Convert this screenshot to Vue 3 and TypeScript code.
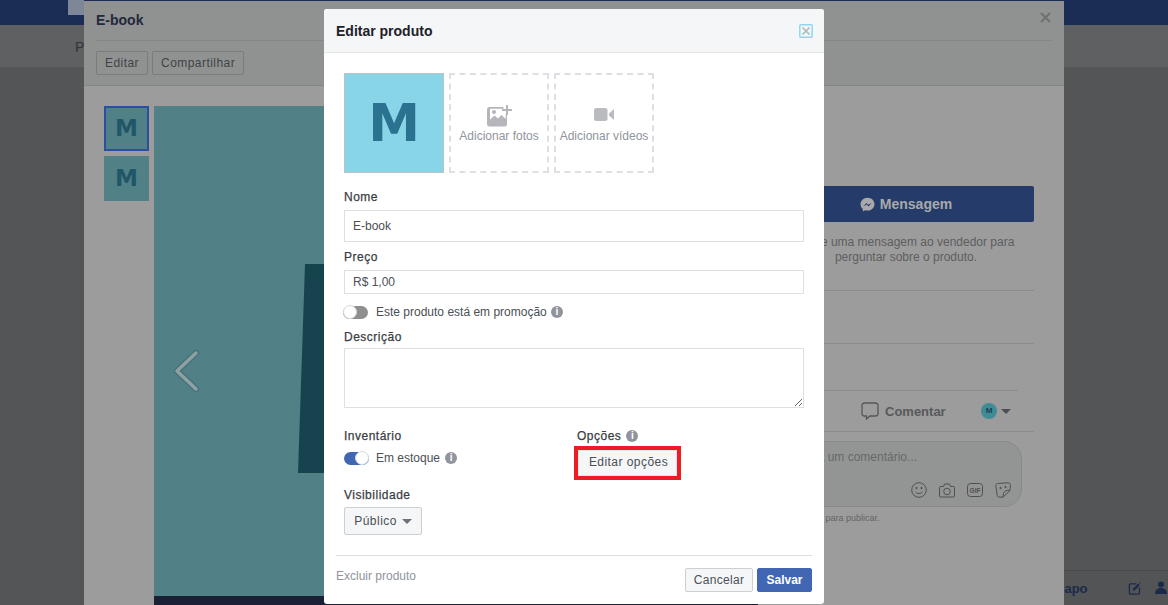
<script setup lang="ts">
import { ref } from 'vue'
const nome = ref('E-book')
const preco = ref('R$ 1,00')
</script>

<template>
  <div class="screen">
    <header class="nav"><span class="nav-logo"></span></header>
    <div class="subbar">Pá</div>

    <div class="chatbar">
      <span class="chat-word">Bate-papo</span>
      <svg width="15" height="15" viewBox="0 0 15 15" fill="none"><path d="M9 2.500H2.500a1 1 0 0 0-1 1v9a1 1 0 0 0 1 1h9a1 1 0 0 0 1-1V6.500" stroke="#1c2a4a" stroke-width="1.400" /><path d="M5 10l.7-2.500L11 2.200l1.800 1.800L7.500 9.300z" fill="#1c2a4a" /><path d="M13 .6l1 1-.8.8-1-1z" fill="#1c2a4a" /></svg>
      <svg class="chat-person" width="14" height="14" viewBox="0 0 14 14"><circle cx="7" cy="3.500" r="3" fill="#1c2a4a" /><path d="M1 13c0-4 2.500-6 6-6s6 2 6 6z" fill="#1c2a4a" /></svg>
    </div>

    <section class="dialog">
      <div class="dialog-head">
        <div class="dialog-title">
          <span>E-book</span>
          <svg class="dialog-x" width="11" height="11" viewBox="0 0 11 11"><path d="M1 1l9 9M10 1l-9 9" stroke="#707172" stroke-width="2.2" /></svg>
        </div>
        <div class="dialog-actions">
          <span class="ghost">Editar</span>
          <span class="ghost">Compartilhar</span>
        </div>
      </div>
      <div class="dialog-body">
        <div class="thumbs">
          <div class="thumb active">M</div>
          <div class="thumb">M</div>
        </div>
        <div class="stage">
          <div class="art">
            <div class="art-shape"></div>
            <svg class="art-prev" width="28" height="44" viewBox="0 0 28 44"><path d="M22 4L3 22l19 18" fill="none" stroke="#44737b" stroke-width="6.500" stroke-linecap="round" stroke-linejoin="round" /><path d="M22 4L3 22l19 18" fill="none" stroke="#8fa0a2" stroke-width="3.500" stroke-linecap="round" stroke-linejoin="round" /></svg>
          </div>
          <div class="art-foot"></div>
        </div>
        <aside class="side">
          <div class="msg-btn">
            <svg width="15" height="15" viewBox="0 0 16 16"><path d="M8 .8C3.800.8.600 3.900.600 7.800c0 2.100.900 3.900 2.400 5.100v2.500l2.300-1.300c.8.200 1.700.4 2.700.4 4.200 0 7.400-3.100 7.400-6.900S12.200.8 8 .8z" fill="#a9a9a9" /><path d="M3.600 10l3.200-3.600 1.900 1.900 3.600-1.900-3.200 3.600-1.900-1.900z" fill="#253c6b" /></svg>
            <span>Mensagem</span>
          </div>
          <p class="side-note">Envie uma mensagem ao vendedor para<br />perguntar sobre o produto.</p>
          <div class="side-sep first"></div>
          <div class="side-sep second"></div>
          <div class="side-sep third"></div>
          <div class="comment-row">
            <svg width="18" height="18" viewBox="0 0 18 18"><path d="M3.500 1h11A2.500 2.500 0 0 1 17 3.500v8a2.500 2.500 0 0 1-2.500 2.500H9l-3.500 3v-3h-2A2.500 2.500 0 0 1 1 11.500v-8A2.500 2.500 0 0 1 3.500 1z" fill="none" stroke="#555658" stroke-width="1.300" /></svg>
            <span class="comment-word">Comentar</span>
            <span class="avatar">M</span>
            <span class="caret dim"></span>
          </div>
          <div class="comment-box">
            <span class="comment-ph">Escreva um comentário...</span>
            <div class="comment-icons">
              <svg width="16" height="16" viewBox="0 0 16 16" fill="none" stroke="#4f5052"><circle cx="8" cy="8" r="7.300" /><circle cx="5.500" cy="6" r=".7" fill="#4f5052" /><circle cx="10.500" cy="6" r=".7" fill="#4f5052" /><path d="M4.500 10c1.800 2 5.200 2 7 0" /></svg>
              <svg width="16" height="15" viewBox="0 0 16 15" fill="none" stroke="#4f5052"><path d="M1.500 3.500h3l1-2.500h5l1 2.500h3a1 1 0 0 1 1 1v8.500a1 1 0 0 1-1 1h-13a1 1 0 0 1-1-1v-8.500a1 1 0 0 1 1-1z" /><circle cx="8" cy="8.500" r="3.300" /></svg>
              <svg width="16" height="14" viewBox="0 0 16 14"><rect x=".5" y=".5" width="15" height="13" rx="3" fill="none" stroke="#4f5052" /><text x="8" y="10" text-anchor="middle" class="gif">GIF</text></svg>
              <svg width="16" height="16" viewBox="0 0 16 16" fill="none" stroke="#4f5052"><path d="M2.500 1.500L13 .8c1.500 0 2.400 1 2.300 2.500l-.3 5.200L8 15.200 4 15c-1 0-1.600-.7-1.800-1.500L.8 3.500c-.1-1 .6-1.900 1.700-2z" /><path d="M15 8.500c-3.500-.5-6 .5-6.500 3-.2 1.300-.3 2.500-.5 3.700" /><circle cx="5.500" cy="6" r=".7" fill="#4f5052" /><circle cx="10.500" cy="5" r=".7" fill="#4f5052" /></svg>
            </div>
          </div>
          <p class="comment-hint">Pressione Enter para publicar.</p>
        </aside>
      </div>
    </section>

    <main class="modal">
      <div class="modal-head">
        <h1>Editar produto</h1>
        <svg width="14" height="14" viewBox="0 0 14 14"><rect x=".8" y=".8" width="12.400" height="12.400" rx="1" fill="none" stroke="#8fd8ea" stroke-width="1.500" /><path d="M3.500 3.500l7 7M10.500 3.500l-7 7" stroke="#b4b7bd" stroke-width="1.700" /></svg>
      </div>
      <div class="modal-body">
        <div class="media">
          <div class="tile-image">M</div>
          <div class="tile-add">
            <svg width="25" height="22" viewBox="0 0 25 22"><path d="M2.500 2h14v1.800H3.800a.8.800 0 0 0-.8.800v10l4.500-4 3.500 3 3.500-3.500 4.200 4V9H20v10a2.500 2.500 0 0 1-2.500 2.500h-15A2.500 2.500 0 0 1 0 19V4.500A2.500 2.500 0 0 1 2.500 2z" fill="#b4b6bc" /><circle cx="7" cy="7" r="2" fill="#b4b6bc" /><path d="M19 0h2v4h4v2h-4v4h-2V6h-4V4h4z" fill="#b4b6bc" /></svg>
            <span>Adicionar fotos</span>
          </div>
          <div class="tile-add">
            <svg class="video" width="20" height="13" viewBox="0 0 20 13"><rect width="13.500" height="13" rx="2.500" fill="#b9bbc1" /><path d="M15 5.500L20 1v11l-5-4.500z" fill="#b9bbc1" /></svg>
            <span>Adicionar vídeos</span>
          </div>
        </div>

        <label class="field-label nome">Nome</label>
        <input v-model="nome" class="text-input tall" type="text" />

        <label class="field-label preco">Preço</label>
        <input v-model="preco" class="text-input short" type="text" />

        <div class="toggle-row promo">
          <span class="toggle"><i></i></span>
          <span class="toggle-text">Este produto está em promoção</span>
          <span class="info">i</span>
        </div>

        <label class="field-label desc">Descrição</label>
        <textarea class="text-area"></textarea>

        <div class="split">
          <div class="split-left">
            <div class="field-label">Inventário</div>
            <div class="toggle-row stock">
              <span class="toggle on"><i></i></span>
              <span class="toggle-text">Em estoque</span>
              <span class="info">i</span>
            </div>
          </div>
          <div class="split-right">
            <div class="field-label with-info">Opções <span class="info">i</span></div>
            <button class="btn options" type="button">Editar opções</button>
          </div>
        </div>

        <div class="field-label vis">Visibilidade</div>
        <button class="btn select" type="button">Público <span class="caret"></span></button>

        <div class="modal-foot">
          <a class="delete">Excluir produto</a>
          <div class="foot-actions">
            <button class="btn small" type="button">Cancelar</button>
            <button class="btn small primary" type="button">Salvar</button>
          </div>
        </div>
      </div>
    </main>
  </div>
</template>

<style>
html, body { margin: 0; padding: 0; }
</style>

<style scoped>
.screen {
  position: relative;
  width: 1168px;
  height: 605px;
  overflow: hidden;
  background: #545556;
  font-family: "Liberation Sans", Arial, sans-serif;
  font-size: 12px;
}
.nav { height: 25px; background: #1b2d54; padding-left: 68px; box-sizing: border-box; }
.nav-logo { display: block; width: 16px; height: 15px; background: #7d8797; }
.subbar {
  height: 43px;
  box-sizing: border-box;
  padding: 14px 0 0 75px;
  background: #5f6061;
  font-size: 14px;
  color: #323438;
  border-bottom: 1px solid #565758;
}

.dialog {
  position: absolute;
  left: 84px;
  top: 1px;
  width: 980px;
  height: 604px;
  background: #9c9c9c;
}
.dialog-head { height: 85px; box-sizing: border-box; padding: 0 12px; background: #909292; border-bottom: 1px solid #848585; }
.dialog-title {
  height: 40px;
  box-sizing: border-box;
  border-bottom: 1px solid #848585;
  display: flex;
  align-items: center;
  justify-content: space-between;
  padding-bottom: 2px;
  font-size: 14px;
  font-weight: 700;
  color: #23283a;
}
.dialog-x { margin-right: 1px; margin-top: -4px; }
.dialog-actions { display: flex; gap: 4px; padding-top: 10px; }
.ghost {
  height: 24px;
  box-sizing: border-box;
  padding: 0 8px;
  line-height: 22px;
  border: 1px solid #7b7c7d;
  border-radius: 2px;
  color: #3f4246;
  letter-spacing: .45px;
}
.dialog-body { display: flex; padding: 20px 30px 0 20px; }
.thumbs { width: 45px; display: flex; flex-direction: column; gap: 5px; margin-right: 5px; }
.thumb {
  width: 45px;
  height: 45px;
  box-sizing: border-box;
  background: #528087;
  color: #1f5668;
  font-family: "DejaVu Sans", sans-serif;
  font-size: 23px;
  font-weight: 700;
  line-height: 45px;
  text-align: center;
}
.thumb.active { border: 2px solid #2850a0; line-height: 41px; }
.stage { width: 604px; margin-right: 20px; }
.art { position: relative; height: 490px; background: #528087; overflow: hidden; }
.art-foot { height: 20px; background: #1a2035; }
.art-shape {
  position: absolute;
  left: 144px;
  top: 158px;
  width: 300px;
  height: 209px;
  background: #17434f;
  clip-path: polygon(7px 0, 100% 0, 100% 100%, 0 100%);
}
.art-prev { position: absolute; left: 20px; top: 243px; }
.side { width: 256px; color: #5d5e60; }
.msg-btn {
  margin-top: 80px;
  height: 36px;
  background: #253c6b;
  border-radius: 2px;
  color: #a9a9a9;
  font-size: 14px;
  font-weight: 700;
  display: flex;
  align-items: center;
  justify-content: center;
  gap: 5px;
}
.side-note { margin: 13px 0 0; line-height: 15px; text-align: center; }
.side-sep { height: 1px; background: #8a8b8b; }
.side-sep.first { margin-top: 25px; }
.side-sep.second { margin-top: 52px; }
.side-sep.third { margin-top: 46px; margin-right: 16px; }
.comment-row {
  height: 41px;
  box-sizing: border-box;
  border-bottom: 1px solid #8a8b8b;
  display: flex;
  align-items: center;
  padding-left: 83px;
}
.comment-word { margin-left: 6px; font-size: 13px; font-weight: 700; color: #58595b; width: 96px; }
.avatar {
  width: 16px;
  height: 16px;
  border-radius: 50%;
  background: #3f8c97;
  color: #17434f;
  font-size: 8px;
  font-weight: 700;
  line-height: 16px;
  text-align: center;
}
.caret.dim { border-top-color: #4d4e50; margin-left: 4px; }
.comment-box {
  margin: 9px 12px 0 0;
  height: 66px;
  box-sizing: border-box;
  padding: 8px 10px 0 2px;
  border: 1px solid #88898a;
  border-radius: 18px;
  background: #939594;
}
.comment-ph { display: block; font-size: 12px; color: #66686a; line-height: 14px; }
.comment-icons { display: flex; gap: 12px; justify-content: flex-end; align-items: center; margin-top: 18px; }
.gif { font: 700 6.500px "Liberation Sans", sans-serif; fill: #4f5052; }
.comment-hint { margin: 6px 0 0 -19px; font-size: 9px; color: #636466; }

.chatbar {
  position: absolute;
  right: 0;
  bottom: 0;
  width: 144px;
  height: 35px;
  box-sizing: border-box;
  border-top: 1px solid #48494b;
  background: #535456;
  display: flex;
  align-items: center;
  color: #1c2a4a;
}
.chat-word { width: 113px; font-size: 13px; font-weight: 700; }
.chat-person { margin-left: 12px; flex: none; }

.modal {
  position: absolute;
  left: 324px;
  top: 9px;
  width: 500px;
  height: 595px;
  background: #fff;
  border-radius: 3px;
  overflow: hidden;
  color: #4b4f56;
}
.modal-head {
  height: 44px;
  box-sizing: border-box;
  padding: 0 11px 0 12px;
  display: flex;
  align-items: center;
  justify-content: space-between;
  background: #f5f6f7;
  border-bottom: 1px solid #e5e5e5;
}
.modal-head h1 { margin: 0; font-size: 14px; font-weight: 700; color: #1d2129; }
.modal-body { padding: 20px 20px 0; display: flex; flex-direction: column; align-items: stretch; }
.media { display: flex; gap: 5px; }
.tile-image {
  width: 100px;
  height: 100px;
  box-sizing: border-box;
  border: 1px solid #b9c4c8;
  background: #87d5e6;
  color: #2b7290;
  font-family: "DejaVu Sans", sans-serif;
  font-size: 52px;
  font-weight: 700;
  line-height: 98px;
  text-align: center;
}
.tile-add {
  width: 100px;
  height: 100px;
  box-sizing: border-box;
  border: 2px dashed #dddfe2;
  display: flex;
  flex-direction: column;
  align-items: center;
  padding-top: 30px;
  color: #90949c;
  white-space: nowrap;
}
.tile-add span { display: block; margin-top: 2px; }
.tile-add svg.video { margin: 3px 0 6px; }
.field-label {
  display: block;
  height: 16px;
  line-height: 16px;
  color: #3a3d43;
  letter-spacing: .5px;
  -webkit-text-stroke: .25px #3a3d43;
}
.nome { margin-top: 16px; }
.preco { margin-top: 7px; }
.desc { margin-top: 7px; }
.vis { margin-top: 11px; }
.text-input {
  display: block;
  width: 100%;
  box-sizing: border-box;
  border: 1px solid #dddfe2;
  padding: 0 8px;
  margin-top: 5px;
  font: inherit;
  color: #4b4f56;
  background: #fff;
  outline: none;
}
.tall { height: 32px; }
.short { height: 24px; }
.toggle-row { height: 20px; display: flex; align-items: center; }
.promo { margin-top: 8px; }
.stock { margin-top: 4px; }
.stock .info { margin-left: 5px; }
.toggle {
  position: relative;
  width: 25px;
  height: 13px;
  margin-right: 8px;
  margin-left: -1px;
  border-radius: 7px;
  background: #8f8f8f;
  flex: none;
}
.toggle i {
  position: absolute;
  left: 0;
  top: -1px;
  width: 14px;
  height: 14px;
  box-sizing: border-box;
  border-radius: 50%;
  background: #fff;
  border: 1px solid #d8dade;
}
.toggle.on { background: #4267b2; margin-left: 0; margin-right: 7px; }
.toggle.on i { left: 11px; }
.toggle-text { color: #4b4f56; }
.info {
  display: inline-block;
  width: 12px;
  height: 12px;
  margin-left: 4px;
  border-radius: 50%;
  background: #90949c;
  color: #fff;
  font-size: 10px;
  font-weight: 700;
  line-height: 12px;
  text-align: center;
  letter-spacing: 0;
  -webkit-text-stroke: 0;
}
.text-area {
  display: block;
  width: 100%;
  height: 60px;
  box-sizing: border-box;
  margin: 3px 0 0;
  border: 1px solid #dddfe2;
  padding: 4px 8px;
  font: inherit;
  outline: none;
}
.split { display: flex; margin-top: 20px; }
.split-left { width: 233px; }
.with-info { display: flex; align-items: center; }
.with-info .info { margin-left: 5px; }
.btn {
  display: inline-block;
  box-sizing: border-box;
  border: 1px solid #ccd0d5;
  border-radius: 2px;
  background: #f5f6f7;
  color: #4b4f56;
  font: inherit;
  letter-spacing: .5px;
  padding: 0;
}
.options {
  display: block;
  width: 99px;
  height: 26px;
  margin: 6px 0 0 1px;
  padding: 0 0 2px 2px;
  letter-spacing: .45px;
  outline: 4px solid #ed1c24;
  border-color: #e4e5e8;
  border-radius: 0;
}
.select { width: 78px; height: 28px; margin-top: 4px; align-self: flex-start; }
.caret {
  display: inline-block;
  width: 0;
  height: 0;
  border-left: 5px solid transparent;
  border-right: 5px solid transparent;
  border-top: 5px solid #6d7078;
  margin-left: 1px;
  vertical-align: 1px;
}
.modal-foot {
  margin: 20px -8px 0;
  border-top: 1px solid #dddfe2;
  padding-top: 12px;
  display: flex;
  justify-content: space-between;
}
.delete { color: #90949c; line-height: 16px; }
.foot-actions { display: flex; gap: 4px; }
.small { height: 24px; width: 68px; letter-spacing: .3px; }
.primary {
  width: 55px;
  background: #4267b2;
  border-color: #4267b2;
  color: #fff;
  font-weight: 700;
  letter-spacing: 0;
}
</style>
